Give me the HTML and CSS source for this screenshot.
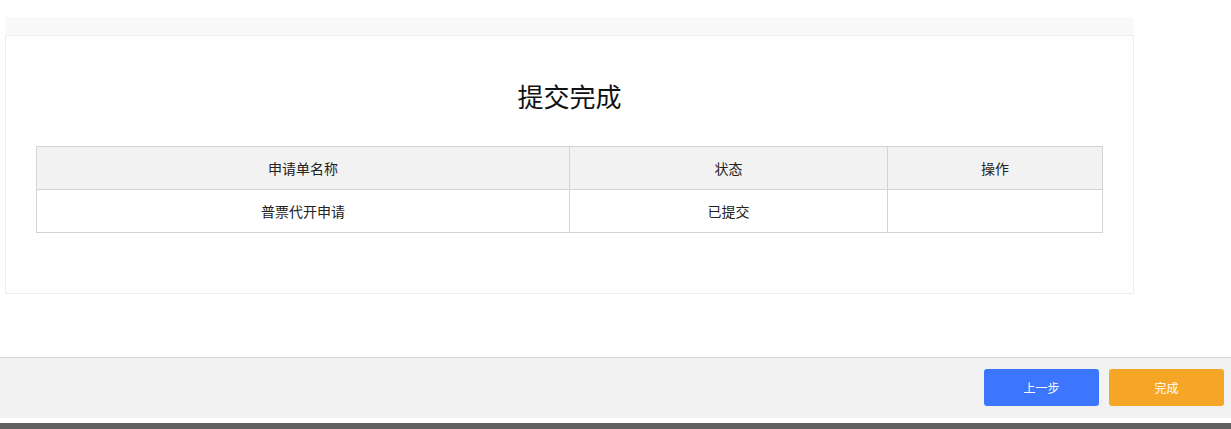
FILE: index.html
```html
<!DOCTYPE html>
<html lang="zh-CN">
<head>
<meta charset="utf-8">
<title>提交完成</title>
<link rel="stylesheet" href="styles.css">
</head>
<body>
<div class="app">
  <main class="content">
    <div class="strip"></div>
    <section class="card">
      <h1 class="title">提交完成</h1>
      <table class="result">
        <colgroup>
          <col class="c-name">
          <col class="c-status">
          <col class="c-op">
        </colgroup>
        <thead>
          <tr><th>申请单名称</th><th>状态</th><th>操作</th></tr>
        </thead>
        <tbody>
          <tr><td>普票代开申请</td><td>已提交</td><td></td></tr>
        </tbody>
      </table>
    </section>
  </main>
  <footer class="footer">
    <div class="actions">
      <button class="btn btn-prev">上一步</button>
      <button class="btn btn-done">完成</button>
    </div>
    <div class="gap"></div>
    <div class="dark"></div>
  </footer>
</div>
</body>
</html>
```

FILE: styles.css
```css
* { box-sizing: border-box; }
html, body { margin: 0; padding: 0; }
body {
  font-family: "Microsoft YaHei", "Noto Sans CJK SC", "Liberation Sans", sans-serif;
  color: #222;
  background: #fff;
}
.app {
  min-height: 429px;
  display: flex;
  flex-direction: column;
}
.content {
  padding: 17px 0 0 5px;
  width: 1134px;
}
.strip {
  height: 18px;
  background: #f9f9f9;
}
.card {
  border: 1px solid #eeeeee;
  height: 259px;
  padding: 0 30px;
}
.title {
  margin: 0;
  padding-top: 40px;
  height: 110px;
  text-align: center;
  font-size: 26px;
  font-weight: normal;
  line-height: 40px;
  color: #111;
}
.result {
  width: 100%;
  border-collapse: collapse;
  font-size: 14px;
  color: #222;
}
.c-name { width: 533px; }
.c-status { width: 318px; }
.result th, .result td {
  border: 1px solid #d4d4d4;
  height: 43px;
  padding: 0;
  text-align: center;
  font-weight: normal;
}
.result th { background: #f2f2f2; }
.footer {
  margin-top: auto;
  border-top: 1px solid #d3d3d3;
}
.actions {
  background: #f2f2f2;
  height: 60px;
  display: flex;
  justify-content: flex-end;
  align-items: flex-start;
  gap: 10px;
  padding: 11px 7px 0 0;
}
.btn {
  width: 115px;
  height: 37px;
  border: none;
  border-radius: 3px;
  color: #fff;
  font-family: inherit;
  font-size: 12px;
  cursor: pointer;
}
.btn-prev { background: #3c76ff; }
.btn-done { background: #f6a626; }
.gap { height: 5px; background: #fff; }
.dark { height: 6px; background: #606060; }
```
